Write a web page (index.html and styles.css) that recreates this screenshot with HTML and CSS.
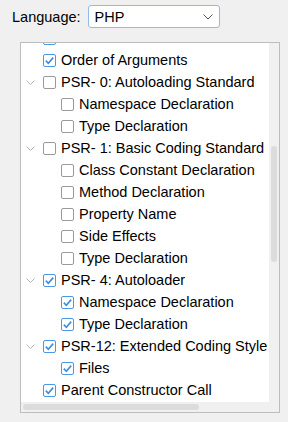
FILE: index.html
```
<!DOCTYPE html>
<html lang="en">
<head>
    <meta charset="UTF-8">
    <title>Sniffer Rules</title>
    <link rel="stylesheet" href="styles.css">
</head>
<body>
    <div class="toolbar">
        <span class="label">Language:</span>
        <div class="select">
            <span>PHP</span>
            <svg class="caret" width="10" height="6" viewBox="0 0 10 6"><polyline points="0.5,0.5 5,5 9.5,0.5" fill="none" stroke="#555" stroke-width="1"/></svg>
        </div>
    </div>

    <div class="tree">
        <div class="view" id="view">
            <div class="rows">
                <!-- above the fold -->
                <div class="row"><span class="arrow"><svg width="9" height="5" viewBox="0 0 9 5"><polyline points="0.5,0.5 4.5,4.5 8.5,0.5" fill="none" stroke="#b4b4b4"/></svg></span><span class="box on"><svg viewBox="0 0 13 13"><polyline points="2.8,6.6 5.3,9.2 10.2,3.6"/></svg></span>Generic</div>
                <div class="row l1"><span class="arrow"></span><span class="box on"><svg viewBox="0 0 13 13"><polyline points="2.8,6.6 5.3,9.2 10.2,3.6"/></svg></span>Array Indent</div>
                <div class="row l1"><span class="arrow"></span><span class="box on"><svg viewBox="0 0 13 13"><polyline points="2.8,6.6 5.3,9.2 10.2,3.6"/></svg></span>Byte Order Mark</div>
                <div class="row l1"><span class="arrow"></span><span class="box on"><svg viewBox="0 0 13 13"><polyline points="2.8,6.6 5.3,9.2 10.2,3.6"/></svg></span>Line Endings</div>
                <div class="row l1"><span class="arrow"></span><span class="box on"><svg viewBox="0 0 13 13"><polyline points="2.8,6.6 5.3,9.2 10.2,3.6"/></svg></span>Line Length</div>
                <div class="row"><span class="arrow"><svg width="9" height="5" viewBox="0 0 9 5"><polyline points="0.5,0.5 4.5,4.5 8.5,0.5" fill="none" stroke="#b4b4b4"/></svg></span><span class="box on"><svg viewBox="0 0 13 13"><polyline points="2.8,6.6 5.3,9.2 10.2,3.6"/></svg></span>Squiz</div>
                <div class="row l1"><span class="arrow"></span><span class="box on"><svg viewBox="0 0 13 13"><polyline points="2.8,6.6 5.3,9.2 10.2,3.6"/></svg></span>Class Declaration</div>
                <div class="row l1"><span class="arrow"></span><span class="box on"><svg viewBox="0 0 13 13"><polyline points="2.8,6.6 5.3,9.2 10.2,3.6"/></svg></span>Scope Closing Brace</div>
                <div class="row l1"><span class="arrow"></span><span class="box on"><svg viewBox="0 0 13 13"><polyline points="2.8,6.6 5.3,9.2 10.2,3.6"/></svg></span>Lowercase PHP Functions</div>
                <div class="row"><span class="arrow"></span><span class="box on"><svg viewBox="0 0 13 13"><polyline points="2.8,6.6 5.3,9.2 10.2,3.6"/></svg></span>Lowercase Keywords</div>
                <div class="row"><span class="arrow"></span><span class="box on"><svg viewBox="0 0 13 13"><polyline points="2.8,6.6 5.3,9.2 10.2,3.6"/></svg></span>Multiple Statement Alignment</div>
                <div class="row"><span class="arrow"></span><span class="box on"><svg viewBox="0 0 13 13"><polyline points="2.8,6.6 5.3,9.2 10.2,3.6"/></svg></span>Opening Brace Same Line</div>
                <div class="row"><span class="arrow"></span><span class="box on"><svg viewBox="0 0 13 13"><polyline points="2.8,6.6 5.3,9.2 10.2,3.6"/></svg></span>Operator Spacing</div>
                <div class="row"><span class="arrow"></span><span class="box on"><svg viewBox="0 0 13 13"><polyline points="2.8,6.6 5.3,9.2 10.2,3.6"/></svg></span>Lowercase Constants</div>

                <!-- in view -->
                <div class="row"><span class="arrow"></span><span class="box on"><svg viewBox="0 0 13 13"><polyline points="2.8,6.6 5.3,9.2 10.2,3.6"/></svg></span>Order of Arguments</div>
                <div class="row"><span class="arrow"><svg width="9" height="5" viewBox="0 0 9 5"><polyline points="0.5,0.5 4.5,4.5 8.5,0.5" fill="none" stroke="#b4b4b4"/></svg></span><span class="box"></span>PSR- 0: Autoloading Standard</div>
                <div class="row l1"><span class="arrow"></span><span class="box"></span>Namespace Declaration</div>
                <div class="row l1"><span class="arrow"></span><span class="box"></span>Type Declaration</div>
                <div class="row"><span class="arrow"><svg width="9" height="5" viewBox="0 0 9 5"><polyline points="0.5,0.5 4.5,4.5 8.5,0.5" fill="none" stroke="#b4b4b4"/></svg></span><span class="box"></span>PSR- 1: Basic Coding Standard</div>
                <div class="row l1"><span class="arrow"></span><span class="box"></span>Class Constant Declaration</div>
                <div class="row l1"><span class="arrow"></span><span class="box"></span>Method Declaration</div>
                <div class="row l1"><span class="arrow"></span><span class="box"></span>Property Name</div>
                <div class="row l1"><span class="arrow"></span><span class="box"></span>Side Effects</div>
                <div class="row l1"><span class="arrow"></span><span class="box"></span>Type Declaration</div>
                <div class="row"><span class="arrow"><svg width="9" height="5" viewBox="0 0 9 5"><polyline points="0.5,0.5 4.5,4.5 8.5,0.5" fill="none" stroke="#b4b4b4"/></svg></span><span class="box on"><svg viewBox="0 0 13 13"><polyline points="2.8,6.6 5.3,9.2 10.2,3.6"/></svg></span>PSR- 4: Autoloader</div>
                <div class="row l1"><span class="arrow"></span><span class="box on"><svg viewBox="0 0 13 13"><polyline points="2.8,6.6 5.3,9.2 10.2,3.6"/></svg></span>Namespace Declaration</div>
                <div class="row l1"><span class="arrow"></span><span class="box on"><svg viewBox="0 0 13 13"><polyline points="2.8,6.6 5.3,9.2 10.2,3.6"/></svg></span>Type Declaration</div>
                <div class="row"><span class="arrow"><svg width="9" height="5" viewBox="0 0 9 5"><polyline points="0.5,0.5 4.5,4.5 8.5,0.5" fill="none" stroke="#b4b4b4"/></svg></span><span class="box on"><svg viewBox="0 0 13 13"><polyline points="2.8,6.6 5.3,9.2 10.2,3.6"/></svg></span>PSR-12: Extended Coding Style</div>
                <div class="row l1"><span class="arrow"></span><span class="box on"><svg viewBox="0 0 13 13"><polyline points="2.8,6.6 5.3,9.2 10.2,3.6"/></svg></span>Files</div>
                <div class="row"><span class="arrow"></span><span class="box on"><svg viewBox="0 0 13 13"><polyline points="2.8,6.6 5.3,9.2 10.2,3.6"/></svg></span>Parent Constructor Call</div>

                <!-- below the fold -->
                <div class="row"><span class="arrow"></span><span class="box on"><svg viewBox="0 0 13 13"><polyline points="2.8,6.6 5.3,9.2 10.2,3.6"/></svg></span>Return Type Declaration</div>
                <div class="row"><span class="arrow"></span><span class="box on"><svg viewBox="0 0 13 13"><polyline points="2.8,6.6 5.3,9.2 10.2,3.6"/></svg></span>Scope Indent</div>
                <div class="row"><span class="arrow"></span><span class="box on"><svg viewBox="0 0 13 13"><polyline points="2.8,6.6 5.3,9.2 10.2,3.6"/></svg></span>Short Array Syntax</div>
                <div class="row"><span class="arrow"></span><span class="box on"><svg viewBox="0 0 13 13"><polyline points="2.8,6.6 5.3,9.2 10.2,3.6"/></svg></span>Short Open Tag</div>
                <div class="row"><span class="arrow"></span><span class="box"></span>Static Closure</div>
                <div class="row"><span class="arrow"></span><span class="box"></span>Strict Types</div>
                <div class="row"><span class="arrow"></span><span class="box on"><svg viewBox="0 0 13 13"><polyline points="2.8,6.6 5.3,9.2 10.2,3.6"/></svg></span>Switch Declaration</div>
                <div class="row"><span class="arrow"></span><span class="box on"><svg viewBox="0 0 13 13"><polyline points="2.8,6.6 5.3,9.2 10.2,3.6"/></svg></span>Trailing Whitespace</div>
                <div class="row"><span class="arrow"></span><span class="box on"><svg viewBox="0 0 13 13"><polyline points="2.8,6.6 5.3,9.2 10.2,3.6"/></svg></span>Valid Class Name</div>
            </div>
        </div>
        <div class="vbar"><div class="thumb"></div></div>
        <div class="hbar"><div class="thumb"></div></div>
        <div class="corner"></div>
    </div>

    <script>
        document.getElementById('view').scrollTop = 302;
    </script>
</body>
</html>
```

FILE: styles.css
```
body {
    margin: 0;
    background: #f0f0f0;
    font-family: "Liberation Sans", Arial, sans-serif;
    font-size: 14.5px;
    color: #000;
}
.toolbar {
    display: flex;
    align-items: center;
    padding: 5px 0 0 12px;
    height: 23px;
}
.label {
    margin-right: 7px;
}
.select {
    box-sizing: border-box;
    width: 132px;
    height: 23px;
    border: 1px solid #8fbbe8;
    border-radius: 3px;
    background: #fff;
    display: flex;
    align-items: center;
    justify-content: space-between;
    padding: 0 6px;
}
.caret {
    margin-top: 1px;
}
.tree {
    width: 258px;
    height: 369px;
    margin: 14px 0 0 20px;
    border: 1px solid #bdbdbd;
    background: #fff;
    display: grid;
    grid-template-columns: 248px 10px;
    grid-template-rows: 359px 10px;
}
.view {
    overflow: hidden;
}
.vbar, .hbar, .corner {
    background: #f0f0f0;
}
.vbar .thumb {
    width: 6px;
    height: 116px;
    margin: 103px 0 0 2px;
    border-radius: 3px;
    background: #dcdcdc;
}
.hbar .thumb {
    width: 176px;
    height: 6px;
    margin: 2px 0 0 2px;
    border-radius: 3px;
    background: #dcdcdc;
}
.rows {
    width: 342px;
}
.row {
    height: 22px;
    display: flex;
    align-items: center;
    white-space: nowrap;
}
.row.l1 {
    padding-left: 18px;
}
.arrow {
    width: 22px;
    display: flex;
    padding-left: 5px;
    box-sizing: border-box;
}
.box {
    box-sizing: border-box;
    width: 13px;
    height: 13px;
    border: 1px solid #9a9a9a;
    border-radius: 2px;
    background: #fff;
    margin-right: 5px;
    flex: none;
}
.box svg {
    display: block;
    width: 13px;
    height: 13px;
    margin: -1px;
}
.box.on {
    border-color: #4a98e6;
}
.box.on polyline {
    fill: none;
    stroke: #3c8fe0;
    stroke-width: 1.6;
}
```
